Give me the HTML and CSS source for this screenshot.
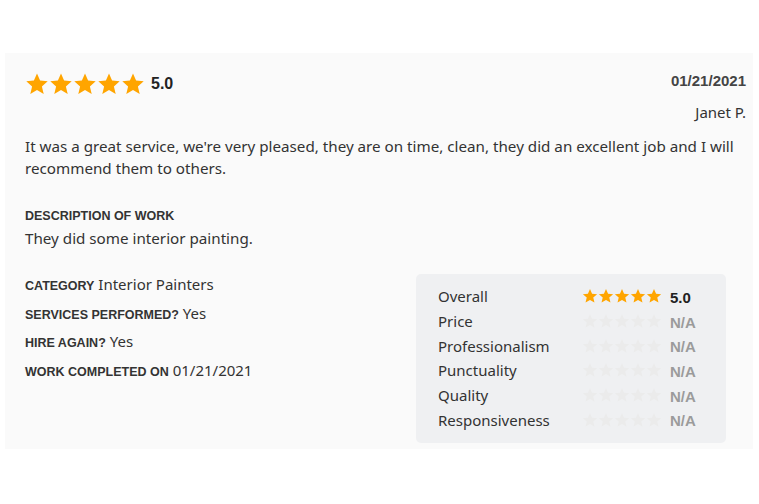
FILE: index.html
```html
<!DOCTYPE html>
<html>
<head>
<meta charset="utf-8">
<link rel="stylesheet" href="styles.css">
</head>
<body>
<svg width="0" height="0" style="position:absolute">
  <defs>
    <symbol id="star" viewBox="0 0 24 24"><path d="M12 1.5l3.1 7.1 7.6.7-5.8 5.1 1.8 7.5L12 17.9l-6.7 4 1.8-7.5L1.3 9.3l7.6-.7z"/></symbol>
  </defs>
</svg>
<div class="card">
  <div class="head">
    <div class="rating">
      <span class="stars big">
        <svg><use href="#star"/></svg><svg><use href="#star"/></svg><svg><use href="#star"/></svg><svg><use href="#star"/></svg><svg><use href="#star"/></svg>
      </span>
      <span class="score">5.0</span>
    </div>
    <div class="meta">
      <div class="date">01/21/2021</div>
      <div class="author">Janet P.</div>
    </div>
  </div>
  <p class="text">It was a great service, we're very pleased, they are on time, clean, they did an excellent job and I will recommend them to others.</p>
  <div class="desc">
    <div class="label">DESCRIPTION OF WORK</div>
    <div class="text">They did some interior painting.</div>
  </div>
  <div class="bottom">
    <div class="facts">
      <div class="fact"><span class="label">CATEGORY</span>&nbsp;Interior Painters</div>
      <div class="fact"><span class="label">SERVICES PERFORMED?</span>&nbsp;Yes</div>
      <div class="fact"><span class="label">HIRE AGAIN?</span>&nbsp;Yes</div>
      <div class="fact"><span class="label">WORK COMPLETED ON</span>&nbsp;01/21/2021</div>
    </div>
    <div class="box">
      <div class="row"><span class="name">Overall</span><span class="stars small on"><svg><use href="#star"/></svg><svg><use href="#star"/></svg><svg><use href="#star"/></svg><svg><use href="#star"/></svg><svg><use href="#star"/></svg></span><span class="val">5.0</span></div>
      <div class="row"><span class="name">Price</span><span class="stars small off"><svg><use href="#star"/></svg><svg><use href="#star"/></svg><svg><use href="#star"/></svg><svg><use href="#star"/></svg><svg><use href="#star"/></svg></span><span class="val na">N/A</span></div>
      <div class="row"><span class="name">Professionalism</span><span class="stars small off"><svg><use href="#star"/></svg><svg><use href="#star"/></svg><svg><use href="#star"/></svg><svg><use href="#star"/></svg><svg><use href="#star"/></svg></span><span class="val na">N/A</span></div>
      <div class="row"><span class="name">Punctuality</span><span class="stars small off"><svg><use href="#star"/></svg><svg><use href="#star"/></svg><svg><use href="#star"/></svg><svg><use href="#star"/></svg><svg><use href="#star"/></svg></span><span class="val na">N/A</span></div>
      <div class="row"><span class="name">Quality</span><span class="stars small off"><svg><use href="#star"/></svg><svg><use href="#star"/></svg><svg><use href="#star"/></svg><svg><use href="#star"/></svg><svg><use href="#star"/></svg></span><span class="val na">N/A</span></div>
      <div class="row"><span class="name">Responsiveness</span><span class="stars small off"><svg><use href="#star"/></svg><svg><use href="#star"/></svg><svg><use href="#star"/></svg><svg><use href="#star"/></svg><svg><use href="#star"/></svg></span><span class="val na">N/A</span></div>
    </div>
  </div>
</div>
</body>
</html>
```

FILE: styles.css
```css
* { box-sizing: border-box; }
html, body { margin: 0; background: #fff; }
body {
  padding: 53px 6px 0 5px;
  font-family: "Noto Sans", sans-serif;
  color: #2b2b2b;
}
.card {
  background: #fafafa;
  height: 396px;
  padding: 18px 7px 0 20px;
}
.head {
  display: flex;
  justify-content: space-between;
  align-items: flex-start;
}
.rating {
  display: flex;
  align-items: center;
  padding-top: 1px;
}
.stars { display: inline-flex; }
.stars svg { fill: #ffa500; }
.big svg { width: 24px; height: 24px; }
.score {
  font-family: "Liberation Sans", sans-serif;
  font-weight: bold;
  font-size: 16px;
  margin-left: 6px;
  color: #222;
}
.meta { text-align: right; }
.date {
  font-family: "Liberation Sans", sans-serif;
  font-weight: bold;
  font-size: 15px;
  color: #444;
  padding-top: 1px;
}
.author {
  font-size: 15px;
  margin-top: 13px;
  color: #333;
}
.text {
  font-size: 15.2px;
  line-height: 22px;
  color: #333;
  margin: 0;
}
p.text { margin-top: 13px; }
.desc { margin-top: 28px; }
.label {
  font-family: "Liberation Sans", sans-serif;
  font-weight: bold;
  font-size: 12.5px;
  color: #333;
}
.desc .label { line-height: 18px; margin-bottom: 2px; }
.bottom {
  display: flex;
  justify-content: space-between;
  align-items: flex-start;
  margin-top: 21px;
}
.fact {
  display: flex;
  align-items: baseline;
  height: 28.5px;
  font-size: 15px;
  line-height: 28.5px;
  color: #333;
  white-space: nowrap;
}
.box {
  background: #eff0f2;
  border-radius: 5px;
  width: 310px;
  height: 169px;
  margin: 4px 20px 0 0;
  padding: 10px 0 0 22px;
}
.row {
  display: flex;
  align-items: center;
  height: 24.7px;
}
.name {
  font-size: 15px;
  width: 144px;
  color: #333;
}
.small svg { width: 16px; height: 16px; }
.off svg { fill: #ebebeb; }
.val {
  font-family: "Liberation Sans", sans-serif;
  font-weight: bold;
  font-size: 15px;
  margin-left: 8px;
  color: #222;
  padding-top: 2px;
}
.val.na { color: #9b9b9b; }
```
